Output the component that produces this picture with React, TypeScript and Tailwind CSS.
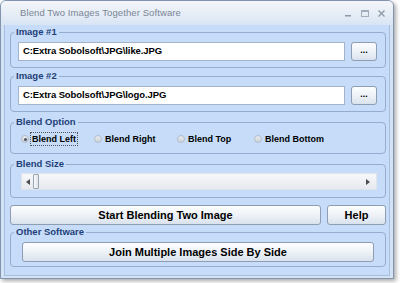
import React from "react";

const btn =
  "border border-[#8e9db2] rounded-[3px] bg-gradient-to-b from-[#fdfeff] via-[#eef2f7] to-[#d9e2ed] text-black font-bold flex items-center justify-center";

function Group({
  label,
  className,
  children,
}: {
  label: string;
  className: string;
  children: React.ReactNode;
}) {
  return (
    <fieldset className={`border border-[#93acd0] rounded-[4px] px-[3px] ${className}`}>
      <legend className="px-[2px] text-[9.5px] leading-[12px] font-bold text-[#1f3f78]">{label}</legend>
      {children}
    </fieldset>
  );
}

function Radio({ label, checked, focus, w }: { label: string; checked?: boolean; focus?: boolean; w: string }) {
  return (
    <div className={`flex items-center ${w}`}>
      <div className="w-[8px] h-[8px] rounded-full border border-[#b3bcc8] bg-gradient-to-b from-[#e9ecf0] to-[#cdd2d9] flex items-center justify-center">
        {checked && <div className="w-[3px] h-[3px] rounded-full bg-[#4a5566]" />}
      </div>
      <span
        className={`ml-[1px] px-[1px] text-[9px] leading-[12px] font-bold text-black border ${
          focus ? "border-dotted border-[#555]" : "border-transparent"
        }`}
      >
        {label}
      </span>
    </div>
  );
}

function PathRow({ value }: { value: string }) {
  return (
    <div className="flex pl-[4px] pr-[5px] pt-[4px] pb-[6px] gap-[6px]">
      <div className="flex-1 h-[19px] bg-white border border-[#a3b3c9] flex items-center pl-[4px] text-[9.5px] font-bold text-black tracking-[-0.1px]">
        {value}
      </div>
      <div className={`${btn} w-[26px] h-[19px] text-[9px] leading-none pb-[3px]`}>...</div>
    </div>
  );
}

export default function App() {
  return (
    <div className="w-[400px] h-[283px] bg-white font-['Liberation_Sans',Arial,sans-serif]">
      <div className="w-[394px] h-[279px] rounded-t-[6px] border border-[#8194ae] bg-[#d3e2f5] shadow-[2px_2px_4px_rgba(0,0,0,0.35)] flex flex-col overflow-hidden">
        <div className="h-[24px] shrink-0 flex items-center bg-gradient-to-b from-[#f4f6f9] to-[#d9e5f4] pl-[19px] pr-[8px]">
          <span className="text-[9.5px] text-[#7b8695] tracking-[0.1px]">Blend Two Images Together Software</span>
          <div className="ml-auto flex items-center gap-[9px] text-[#8f9aa8]">
            <svg width="7" height="7" viewBox="0 0 7 7">
              <rect x="0" y="5" width="6" height="1.5" fill="#8f9aa8" />
            </svg>
            <svg width="8" height="7" viewBox="0 0 8 7">
              <rect x="0.5" y="0.5" width="7" height="6" fill="none" stroke="#a3adb9" />
              <rect x="0.5" y="0.5" width="7" height="1.5" fill="#a3adb9" />
            </svg>
            <svg width="7" height="7" viewBox="0 0 7 7">
              <path d="M0.5 0.5 L6.5 6.5 M6.5 0.5 L0.5 6.5" stroke="#8f9aa8" strokeWidth="1.4" />
            </svg>
          </div>
        </div>
        <div className="flex-1 mx-[3px] mb-[2px] border-x border-b border-[#a7bedc] bg-[#c6dcf8] flex flex-col pl-[5px] pr-[3px]">
          <Group label="Image #1" className="mt-[1px]">
            <PathRow value="C:Extra Sobolsoft\JPG\like.JPG" />
          </Group>
          <Group label="Image #2" className="mt-[2px]">
            <PathRow value="C:Extra Sobolsoft\JPG\logo.JPG" />
          </Group>
          <Group label="Blend Option" className="mt-[4px]">
            <div className="flex pl-[7px] pt-[4px] pb-[7px] h-[25px]">
              <Radio label="Blend Left" checked focus w="w-[73px]" />
              <Radio label="Blend Right" w="w-[83px]" />
              <Radio label="Blend Top" w="w-[77px]" />
              <Radio label="Blend Bottom" w="w-[80px]" />
            </div>
          </Group>
          <Group label="Blend Size" className="mt-[4px]">
            <div className="pl-[7px] pr-[5px] pt-[3px] pb-[7px]">
              <div className="h-[17px] bg-gradient-to-b from-[#f7f8fa] to-[#e6e9ee] border border-[#e0e4ea] flex items-center">
                <svg width="4" height="6" viewBox="0 0 4 6" className="ml-[4px]">
                  <path d="M4 0 L0 3 L4 6 Z" fill="#4a4a4a" />
                </svg>
                <div className="ml-[3px] w-[6px] h-[15px] rounded-[1px] border border-[#9aa5b4] bg-gradient-to-r from-[#fbfbfc] to-[#dfe3e9]" />
                <svg width="4" height="6" viewBox="0 0 4 6" className="ml-auto mr-[6px]">
                  <path d="M0 0 L4 3 L0 6 Z" fill="#4a4a4a" />
                </svg>
              </div>
            </div>
          </Group>
          <div className="mt-[7px] flex gap-[6px] h-[20px]">
            <div className={`${btn} w-[311px] h-[20px] text-[11px]`}>Start Blending Two Image</div>
            <div className={`${btn} flex-1 h-[20px] text-[11px]`}>Help</div>
          </div>
          <Group label="Other Software" className="mt-[1px]">
            <div className="pl-[8px] pr-[8px] pt-[4px] pb-[4px]">
              <div className={`${btn} h-[20px] text-[11px]`}>Join Multiple Images Side By Side</div>
            </div>
          </Group>
        </div>
      </div>
    </div>
  );
}
